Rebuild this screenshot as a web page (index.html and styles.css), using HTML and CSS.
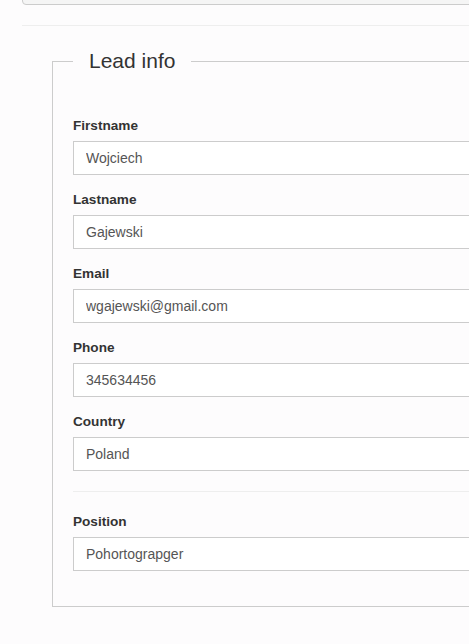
FILE: index.html
```html
<!DOCTYPE html>
<html>
<head>
<meta charset="utf-8">
<link rel="stylesheet" href="styles.css">
</head>
<body>
<div class="page">
  <div class="topbox"></div>
  <hr class="divider">
  <form class="lead-form">
    <fieldset class="lead">
      <legend>Lead info</legend>
      <div class="group">
        <label>Firstname</label>
        <input type="text" value="Wojciech">
      </div>
      <div class="group">
        <label>Lastname</label>
        <input type="text" value="Gajewski">
      </div>
      <div class="group">
        <label>Email</label>
        <input type="text" value="wgajewski@gmail.com">
      </div>
      <div class="group">
        <label>Phone</label>
        <input type="text" value="345634456">
      </div>
      <div class="group">
        <label>Country</label>
        <input type="text" value="Poland">
      </div>
      <hr class="sep">
      <div class="group">
        <label>Position</label>
        <input type="text" value="Pohortograpger">
      </div>
    </fieldset>
  </form>
</div>
</body>
</html>
```
FILE: styles.css
```css
html, body {
  margin: 0;
  padding: 0;
  background: #fdfcfd;
  overflow: hidden;
  font-family: "Liberation Sans", Arial, sans-serif;
  color: #333;
}
.page {
  padding-left: 22px;
  width: 900px;
}
.topbox {
  margin-top: -30px;
  height: 33px;
  border: 1px solid #ccc;
  border-radius: 4px;
  background: #f5f5f5;
}
.divider {
  margin: 20px 0 0 0;
  border: 0;
  border-top: 1px solid #eee;
  height: 0;
}
.lead-form {
  margin: 0;
}
.lead {
  margin: 20px 0 0 30px;
  padding: 41px 20px 19px 20px;
  border: 1px solid #ccc;
  min-width: 0;
}
.lead legend {
  padding: 0 16px;
  font-size: 21px;
  line-height: 30px;
  color: #333;
}
.group {
  margin-bottom: 16px;
}
.group label {
  display: block;
  font-size: 13.6px;
  line-height: 18px;
  font-weight: bold;
  color: #333;
  margin-bottom: 6px;
}
.group input {
  display: block;
  box-sizing: border-box;
  width: 100%;
  height: 34px;
  margin: 0;
  padding: 6px 12px;
  border: 1px solid #ccc;
  border-radius: 0;
  background: #fff;
  font-family: "Liberation Sans", Arial, sans-serif;
  font-size: 14px;
  color: #555;
  outline: none;
}
.sep {
  margin: 20px 0 21px 0;
  border: 0;
  border-top: 1px solid #eee;
  height: 0;
}
```
